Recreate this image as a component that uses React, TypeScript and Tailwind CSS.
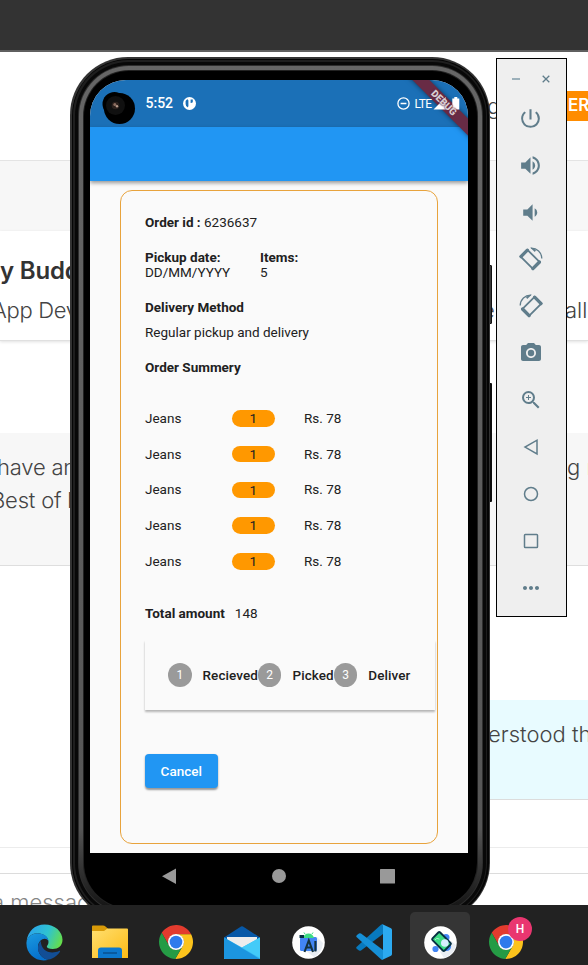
import React from "react";
import {
  MdPowerSettingsNew,
  MdVolumeUp,
  MdVolumeDown,
  MdLocalSee,
  MdZoomIn,
  MdMoreHoriz,
} from "react-icons/md";

const inter = "font-['Inter','Liberation_Sans',sans-serif]";
const roboto = "font-['Roboto','Liberation_Sans',sans-serif]";

/* Chat page visible behind the emulator */
function ChatPage() {
  return (
    <div className={`${inter} flex h-[905px] flex-col overflow-hidden bg-white text-[22px] font-[350] whitespace-nowrap text-[#444]`}>
      <div className="h-[52px] shrink-0 border-b-2 border-[#5f5f5f] bg-[#333333]" />
      <div className="flex h-[109px] shrink-0 items-center border-b border-[#e4e4e4] pl-[487px]">
        <span className="w-[74px] shrink-0">g</span>
        <span className="flex h-[30px] w-[60px] shrink-0 items-center bg-[#ff8c00] pl-[7px] text-[17px] font-semibold text-white">ER</span>
      </div>
      <div className="h-[70px] shrink-0 bg-[#f7f7f7]" />
      <div className="flex h-[110px] shrink-0 flex-col border-b border-[#e0e0e0] pt-[22px] shadow-[0_1px_3px_rgba(0,0,0,0.12)]">
        <div className="h-[36px] text-[24px] leading-[36px] font-semibold tracking-[-0.2px] text-[#333]">y Buddy</div>
        <div className="mt-[4px] flex h-[34px] leading-[34px]">
          <span className="-ml-[8px] w-[490px] shrink-0 tracking-[-0.3px]">App Developer</span>
          <span className="w-[83px] shrink-0">e</span>
          <span>all</span>
        </div>
      </div>
      <div className="h-[92px] shrink-0" />
      <div className="h-[133px] shrink-0 border-b border-[#dedede] bg-[#f7f7f7] pt-[18px] leading-[33px]">
        <div className="flex">
          <span className="-ml-[3px] w-[570px] shrink-0 tracking-[-0.2px]">have any</span>
          <span>g n</span>
        </div>
        <div className="-ml-[9px] tracking-[-0.2px]">Best of luck</div>
      </div>
      <div className="h-[134px] shrink-0" />
      <div className="ml-[280px] h-[100px] shrink-0 border-b border-[#dcdcdc] bg-[#e8fbff] pt-[18px] pl-[208px] leading-[33px]">erstood the</div>
      <div className="h-[48px] shrink-0 border-b border-[#ececec]" />
      <div className="h-[26px] shrink-0 border-b border-[#dcdcdc]" />
      <div className="-ml-[8px] pt-[12px] leading-[33px] text-[#858585]">a message</div>
    </div>
  );
}

function StatusBar() {
  return (
    <div className="flex h-[47px] shrink-0 items-center bg-[#1b70b7] pl-[55.5px] text-white">
      <span className="w-[37px] text-[14px] font-medium">5:52</span>
      <svg width="13" height="13" viewBox="0 0 13 13">
        <circle cx="6.5" cy="6.5" r="6.5" fill="#fff" />
        <path d="M2.6 4Q3.5 2.4 5 2.2V10.5Q2.6 9.6 2.6 7zM7.6 2.6H9.8V5Q9.6 6 7.6 6z" fill="#1b70b7" />
        <path d="M5 3.2V9.5" stroke="#1b70b7" strokeWidth="0.8" />
      </svg>
      <div className="relative z-10 ml-[201px] flex items-center">
        <svg width="13" height="13" viewBox="0 0 13 13" fill="none" stroke="#fff" strokeWidth="1.3">
          <circle cx="6.5" cy="6.5" r="5.6" />
          <path d="M3.6 6.5H9.4" />
        </svg>
        <span className="ml-[5px] w-[18px] text-[12px] tracking-[-0.6px]">LTE</span>
        <svg width="28" height="13" viewBox="0 0 28 13" fill="#fff">
          <path d="M0.5 12.5L13 0V12.5z" />
          <path d="M19.3 1.5H21.3V0H24.3V1.5H26.3V12.5H19.3z" />
        </svg>
      </div>
    </div>
  );
}

/* Corner ribbon: the band lies under the status icons, its lettering over them */
function DebugRibbon() {
  return (
    <>
      <div className="absolute top-[16.5px] left-[300px] h-[11.5px] w-[108px] rotate-45 bg-[#682b45] shadow-[0_0_5px_rgba(0,0,0,0.5)]" />
      <div className="absolute top-[16.5px] left-[300px] z-20 h-[11.5px] w-[108px] rotate-45 text-center text-[9.8px] leading-[11.5px] font-black text-[#d8cdd2] [text-shadow:0_0_1.5px_#682b45,0_0_1.5px_#682b45]">
        DEBUG
      </div>
    </>
  );
}

function Step({ n, label }: { n: number; label: string }) {
  return (
    <div className="flex items-center">
      <span className="flex size-[23.5px] items-center justify-center rounded-full bg-[#9a9a9a] text-[12px] text-white">{n}</span>
      <span className="ml-[11px] font-medium tracking-[0.08px]">{label}</span>
    </div>
  );
}

function OrderCard() {
  return (
    <div className="mx-[30px] mt-[9px] h-[654px] rounded-[12px] border border-[#e8a33c] pt-[24px] pl-[24px] text-[13.5px] leading-[15px] whitespace-nowrap text-[#212121]">
      <div><b>Order id : </b>6236637</div>
      <div className="mt-[20px] flex">
        <div className="w-[115px]"><b className="block">Pickup date:</b>DD/MM/YYYY</div>
        <div><b className="block">Items:</b>5</div>
      </div>
      <b className="mt-[20px] block">Delivery Method</b>
      <div className="mt-[10px]">Regular pickup and delivery</div>
      <b className="mt-[20px] block">Order Summery</b>
      <div className="mt-[25.7px]">
        {[0, 1, 2, 3, 4].map((i) => (
          <div key={i} className="flex h-[35.7px] items-center">
            <span className="w-[86.5px]">Jeans</span>
            <span className="mr-[29px] h-[16.5px] w-[43.5px] rounded-full bg-[#ff9800] text-center leading-[17px]">1</span>
            <span>Rs. 78</span>
          </div>
        ))}
      </div>
      <div className="mt-[27px]"><b className="mr-[10px]">Total amount</b>148</div>
      <div className="mt-[19px] flex h-[70px] w-[289.5px] items-center bg-[#fafafa] pl-[23px] shadow-[0_1.5px_2px_rgba(0,0,0,0.28)]">
        <Step n={1} label="Recieved" />
        <Step n={2} label="Picked" />
        <Step n={3} label="Deliver" />
      </div>
      <button className="mt-[44px] flex h-[34px] w-[72.5px] items-center justify-center rounded-[4px] bg-[#2196f3] font-medium text-white shadow-[0_1.5px_2px_rgba(0,0,0,0.4)]">
        Cancel
      </button>
    </div>
  );
}

function Phone() {
  return (
    <div className={`${roboto} absolute top-[57px] left-[70px] h-[864px] w-[420px]`}>
      <div className="absolute top-[208px] -right-[2px] h-[59px] w-[6px] rounded-[1px] border border-[#111] bg-[#3a3a3a]" />
      <div className="absolute top-[326px] -right-[2px] h-[119px] w-[6px] rounded-[1px] bg-[#0c0c0c]" />
      <div className="relative h-full rounded-[58px] bg-[#333] p-[1.5px]">
        <div className="h-full rounded-[57px] bg-[#050505] p-[1.5px]">
          <div className="h-full rounded-[55px] bg-[#1e1e1e] p-[1.5px]">
            <div className="h-full rounded-[54px] bg-[#080808] p-[3px]">
              <div className="h-full rounded-[51px] bg-[#2e2e2e] p-[1px]">
                <div className="h-full rounded-[50px] bg-linear-to-b from-[#666] via-[#565656] via-90% to-[#111] p-[4px]">
                  <div className="h-full rounded-[46px] bg-[#222] p-[1px]">
                    <div className="flex h-full flex-col rounded-[45px] bg-black pt-[9.5px] pr-[8.5px] pl-[6.5px]">
                      <div className="relative flex h-[773px] w-[378px] flex-col overflow-hidden rounded-t-[36px] bg-[#fafafa]">
                        <StatusBar />
                        <div className="h-[54px] shrink-0 bg-[#2196f3] shadow-[0_2px_4px_rgba(0,0,0,0.4)]" />
                        <OrderCard />
                        <DebugRibbon />
                        <svg className="absolute top-[9px] left-[11px]" width="36" height="38" viewBox="0 0 36 38">
                          <circle cx="18.5" cy="19.5" r="15.5" fill="#000" />
                          <circle cx="13.5" cy="15" r="12" fill="#000" />
                          <circle cx="14.5" cy="16.5" r="9.5" fill="#101010" />
                          <circle cx="14.5" cy="16.5" r="3.8" fill="#2c211d" />
                          <circle cx="13.8" cy="15.5" r="1.5" fill="#8b6d60" />
                          <circle cx="16" cy="17.3" r="1.2" fill="#b79b8c" />
                        </svg>
                      </div>
                      <svg width="378" height="52" viewBox="0 0 378 52" fill="#999">
                        <path d="M86 15.5V31L72 23.2z" />
                        <circle cx="189" cy="23" r="7" />
                        <rect x="290" y="16" width="15" height="14.5" rx="0.5" />
                      </svg>
                    </div>
                  </div>
                </div>
              </div>
            </div>
          </div>
        </div>
      </div>
    </div>
  );
}

function RotateIcon({ flip }: { flip?: boolean }) {
  return (
    <svg width="24" height="24" viewBox="0 0 24 24" fill="none" stroke="currentColor" className={flip ? "-scale-x-100" : ""}>
      <path d="M8.2 2.6L21 15.4L14.2 22.2L1.4 9.4Z" strokeWidth="1.8" strokeLinejoin="round" />
      <path d="M8.4 3.2L2 9.6M20.4 15L13.8 21.6" strokeWidth="3.2" strokeLinecap="round" />
      <path d="M12 1.2C18 1 22.6 5.4 22.8 11.4" strokeWidth="1.3" />
      <path d="M11 0.6L15.8 4.9L17 3.2L14.5 1.2Z" fill="currentColor" stroke="none" />
    </svg>
  );
}

function EmulatorToolbar() {
  const cell = "flex h-[47px] items-center justify-center pr-[2px]";
  return (
    <div className="absolute top-[58px] left-[496px] h-[559px] w-[71px] border border-black bg-[#efefef] text-[#607d8b]">
      <div className="flex h-[35.5px] items-center pt-[5px] pl-[15px]">
        <span className="h-[2px] w-[8px] bg-[#9cb0ba]" />
        <svg className="ml-[22px]" width="8" height="8" viewBox="0 0 8 8" stroke="currentColor" strokeWidth="1.3">
          <path d="M0.7 0.7L7.3 7.3M7.3 0.7L0.7 7.3" />
        </svg>
      </div>
      <div className={cell}><MdPowerSettingsNew size={25} /></div>
      <div className={cell}><MdVolumeUp size={25} /></div>
      <div className={cell}><MdVolumeDown size={25} /></div>
      <div className={cell}><RotateIcon /></div>
      <div className={cell}><RotateIcon flip /></div>
      <div className={cell}><MdLocalSee size={24} /></div>
      <div className={cell}><MdZoomIn size={24} /></div>
      <div className={cell}>
        <svg width="18" height="18" viewBox="0 0 18 18" fill="none" stroke="currentColor" strokeWidth="1.5"><path d="M15 2.2V16L3 9.1z" /></svg>
      </div>
      <div className={cell}>
        <svg width="16" height="16" viewBox="0 0 16 16" fill="none" stroke="currentColor" strokeWidth="1.5"><circle cx="8" cy="8" r="6.5" /></svg>
      </div>
      <div className={cell}>
        <svg width="16" height="16" viewBox="0 0 16 16" fill="none" stroke="currentColor" strokeWidth="1.5"><rect x="1.5" y="1.5" width="13" height="13" rx="0.8" /></svg>
      </div>
      <div className={cell}><MdMoreHoriz size={24} /></div>
    </div>
  );
}

function Chrome() {
  const sector = "M45.3 13A24 24 0 0 0 3.8 11L14.47 29.5A11 11 0 0 1 24 13Z";
  return (
    <svg width="34" height="34" viewBox="0 0 48 48">
      <path d={sector} fill="#e33b2e" />
      <path d={sector} fill="#fcc31c" transform="rotate(120 24 24)" />
      <path d={sector} fill="#259b45" transform="rotate(240 24 24)" />
      <circle cx="24" cy="24" r="11.3" fill="#fff" />
      <circle cx="24" cy="24" r="9" fill="#2f7aec" />
    </svg>
  );
}

function Edge() {
  return (
    <svg width="37" height="37" viewBox="0 0 37 37">
      <defs>
        <linearGradient id="eg" x1="0" y1="0.3" x2="1" y2="0.6"><stop offset="0.1" stopColor="#2ba8e8" /><stop offset="0.55" stopColor="#2fc3d0" /><stop offset="1" stopColor="#65de4b" /></linearGradient>
        <linearGradient id="eb" x1="0" y1="0" x2="0.4" y2="1"><stop offset="0" stopColor="#1b9be0" /><stop offset="1" stopColor="#0670cc" /></linearGradient>
      </defs>
      <path d="M0.6 17C2 7 9 .5 18.5 .5C29 .5 36.5 7.7 36.5 15.8C36.5 22 32 25 26.8 25C23 25 20.8 23.8 20.8 22.6C20.8 21.7 22.5 20.8 22.5 18C22.5 13 17.5 9.2 11.5 9.2C6.5 9.2 2.5 12 .6 17Z" fill="url(#eg)" />
      <path d="M.5 18C1.2 12.8 6 9.2 11.5 9.2C17.5 9.2 22.5 12.8 22.5 17C19.5 12.5 12.5 15.5 12 22.5C11.7 29 16 34.5 22.5 35.8C10.5 39 -0.5 29.8 .5 18Z" fill="url(#eb)" />
      <path d="M14.8 17C11.5 20 11.1 25.5 13.5 29.5C16.5 35 22 36.8 26 34.6C29.5 33 32.3 30.5 34 27.8C34.4 27 33.8 26.6 33 27C24 31 14.8 26.5 14.8 17Z" fill="#124e96" />
    </svg>
  );
}

function Taskbar() {
  const slot = "flex w-[66px] shrink-0 items-center justify-center pt-[14px]";
  return (
    <div className="flex h-[60px] bg-[#222222] pl-[11px]">
      <div className={slot}><Edge /></div>
      <div className={slot}>
        <svg width="36" height="34" viewBox="0 0 36 34">
          <defs><linearGradient id="fg" x2="1" y2="1"><stop stopColor="#ffdf70" /><stop offset="1" stopColor="#fdbb15" /></linearGradient></defs>
          <path d="M0 1.5Q0 .5 1 .5H11Q12.5 .5 13.5 1.5L16 3.8V8H0Z" fill="#d89a08" />
          <path d="M0 6H12L15.5 3.5H35Q36 3.5 36 4.5V33H0Z" fill="url(#fg)" />
          <path d="M6 33V25.5Q6 22.5 9 22.5H27Q30 22.5 30 25.5V33Z" fill="#0d78cc" />
          <path d="M11 28H25" stroke="#08467f" strokeWidth="1.2" />
        </svg>
      </div>
      <div className={slot}><Chrome /></div>
      <div className={slot}>
        <svg width="36" height="33" viewBox="0 0 36 33">
          <path d="M0 11.5L17 .4Q18 0 19 .4L36 11.5V18H0Z" fill="#0758a7" />
          <path d="M3 11H33V20L18 26L3 20Z" fill="#ededed" />
          <path d="M0 11.5L18 21.5L36 11.5V33H0Z" fill="#35baf2" />
          <path d="M0 11.5L36 33H1Q0 33 0 32Z" fill="#1c95df" />
          <path d="M18 21.5L36 11.5V32Z" fill="#43cbf8" />
        </svg>
      </div>
      <div className={slot}>
        <svg width="33" height="33" viewBox="0 0 33 33">
          <circle cx="16.5" cy="16.5" r="16.3" fill="#fff" />
          <path d="M25 11L31 17Q30 27 22 31L14 25Z" fill="#e9edf3" />
          <rect x="8" y="11" width="17" height="14" rx="1.5" fill="#4285f4" />
          <path d="M11 12Q12 7.6 16.5 7.4Q21 7.6 22 12Z" fill="#3ddc84" />
          <path d="M13 8L12 6.5M20 8L21 6.5" stroke="#3ddc84" />
          <path d="M12.5 26L16.8 14.5L21 26M14 21.5H19.5M23.4 15V25.5" stroke="#14323e" strokeWidth="2.1" fill="none" />
          <path d="M7.5 9H12V12H7.5z" fill="#073042" />
        </svg>
      </div>
      <div className={slot}>
        <svg width="36" height="36" viewBox="0 0 36 36">
          <path d="M.5 23Q-.2 24 1 25L3 26.6Q4 27 5 26.4L27 10V.3Q25.8 .1 25 .8Z" fill="#0879bd" />
          <path d="M.5 13Q-.2 12 1 11L3 9.4Q4 9 5 9.6L27 26V35.7Q25.8 35.9 25 35.2Z" fill="#1690d7" />
          <path d="M26.5 .2L35 4.2Q36 4.7 36 6V30Q36 31.2 35 31.8L26.5 35.8Q27 35 27 33.5V2.5Q27 1 26.5 .2Z" fill="#2caaf0" />
        </svg>
      </div>
      <div className="mt-[7px] ml-[3px] flex w-[60px] shrink-0 items-center justify-center rounded-t-[5px] bg-[#353535] pt-[7px]">
        <svg width="33" height="33" viewBox="0 0 33 33">
          <circle cx="16.5" cy="16.5" r="16.3" fill="#fff" />
          <path d="M27 15L32 19Q30 29 20 32L16 26Z" fill="#e9edf3" />
          <circle cx="11.5" cy="23" r="3.1" fill="#4285f4" />
          <circle cx="22" cy="11.5" r="3.5" fill="#4285f4" />
          <circle cx="22.5" cy="20.5" r="4.6" fill="#4285f4" />
          <rect x="-5.4" y="-8.6" width="10.8" height="17.2" rx="1.3" transform="translate(17.5 15.5) rotate(-45)" fill="#3ddc84" stroke="#073042" strokeWidth="1.9" />
          <circle cx="20.8" cy="17" r="3.8" fill="#d7effe" />
          <path d="M11 14Q12.5 11 15.5 13.2" stroke="#a7efca" fill="none" />
        </svg>
      </div>
      <div className="relative ml-[3px] flex w-[66px] shrink-0 items-center justify-center pt-[14px]">
        <Chrome />
        <span className={`${roboto} absolute top-[12px] left-[35px] flex size-[24px] items-center justify-center rounded-full bg-[#e93670] text-[12px] font-medium text-white`}>H</span>
      </div>
    </div>
  );
}

export default function App() {
  return (
    <main className="relative h-[965px] w-[588px] overflow-hidden bg-white">
      <ChatPage />
      <Phone />
      <EmulatorToolbar />
      <div className="relative"><Taskbar /></div>
    </main>
  );
}
